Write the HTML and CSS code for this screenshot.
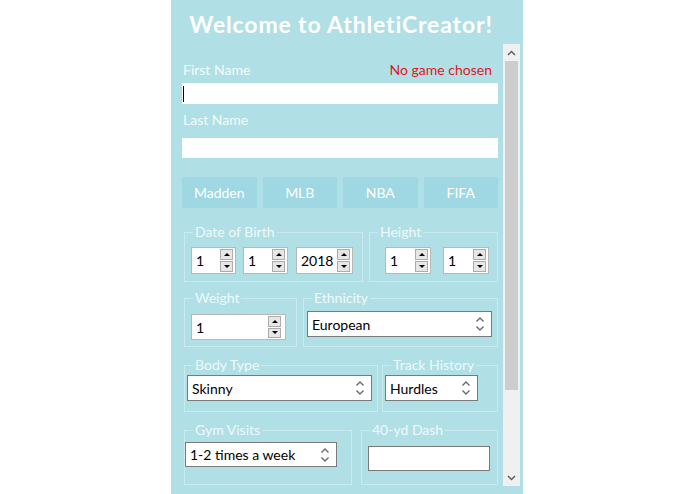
FILE: index.html
```html
<!DOCTYPE html>
<html>
<head>
<meta charset="utf-8">
<link rel="stylesheet" href="styles.css">
</head>
<body>
<div class="app">
  <div class="title">Welcome to AthletiCreator!</div>
  <div class="main">
    <div class="content">
      <div class="label-row first-label"><span>First Name</span><span class="error">No game chosen</span></div>
      <div class="field field-first"><span class="caret"></span></div>
      <div class="label-row last-label"><span>Last Name</span></div>
      <div class="field field-last"></div>
      <div class="games">
        <div class="game">Madden</div>
        <div class="game">MLB</div>
        <div class="game">NBA</div>
        <div class="game">FIFA</div>
      </div>

      <div class="group-row row-dob">
        <fieldset class="group g-dob">
          <legend>Date of Birth</legend>
          <div class="spins">
            <div class="spin s-day"><span class="val">1</span><span class="btns"><span class="up"></span><span class="down"></span></span></div>
            <div class="spin s-month"><span class="val">1</span><span class="btns"><span class="up"></span><span class="down"></span></span></div>
            <div class="spin s-year"><span class="val">2018</span><span class="btns"><span class="up"></span><span class="down"></span></span></div>
          </div>
        </fieldset>
        <fieldset class="group g-height">
          <legend>Height</legend>
          <div class="spins spins-wide">
            <div class="spin s-ft"><span class="val">1</span><span class="btns"><span class="up"></span><span class="down"></span></span></div>
            <div class="spin s-ft"><span class="val">1</span><span class="btns"><span class="up"></span><span class="down"></span></span></div>
          </div>
        </fieldset>
      </div>

      <div class="group-row row-weight">
        <fieldset class="group g-weight">
          <legend>Weight</legend>
          <div class="spin s-weight"><span class="val">1</span><span class="btns btns-weight"><span class="up"></span><span class="down"></span></span></div>
        </fieldset>
        <fieldset class="group g-eth">
          <legend>Ethnicity</legend>
          <div class="combo c-eth"><span class="txt">European</span>
            <svg class="chev" width="10" height="16" viewBox="0 0 10 16"><path d="M1.5 5.5 L5 2 L8.5 5.5 M1.5 10.5 L5 14 L8.5 10.5" fill="none" stroke="#6a6a6a" stroke-width="1.4"/></svg>
          </div>
        </fieldset>
      </div>

      <div class="group-row row-body">
        <fieldset class="group g-body">
          <legend>Body Type</legend>
          <div class="combo c-body"><span class="txt">Skinny</span>
            <svg class="chev" width="10" height="16" viewBox="0 0 10 16"><path d="M1.5 5.5 L5 2 L8.5 5.5 M1.5 10.5 L5 14 L8.5 10.5" fill="none" stroke="#6a6a6a" stroke-width="1.4"/></svg>
          </div>
        </fieldset>
        <fieldset class="group g-track">
          <legend>Track History</legend>
          <div class="combo c-track"><span class="txt">Hurdles</span>
            <svg class="chev" width="10" height="16" viewBox="0 0 10 16"><path d="M1.5 5.5 L5 2 L8.5 5.5 M1.5 10.5 L5 14 L8.5 10.5" fill="none" stroke="#6a6a6a" stroke-width="1.4"/></svg>
          </div>
        </fieldset>
      </div>

      <div class="group-row row-gym">
        <fieldset class="group g-gym">
          <legend>Gym Visits</legend>
          <div class="combo c-gym"><span class="txt">1-2 times a week</span>
            <svg class="chev" width="10" height="16" viewBox="0 0 10 16"><path d="M1.5 5.5 L5 2 L8.5 5.5 M1.5 10.5 L5 14 L8.5 10.5" fill="none" stroke="#6a6a6a" stroke-width="1.4"/></svg>
          </div>
        </fieldset>
        <fieldset class="group g-dash">
          <legend>40-yd Dash</legend>
          <div class="line-input"></div>
        </fieldset>
      </div>
    </div>
    <div class="scrollbar">
      <div class="sb-arrow"><svg width="9" height="6" viewBox="0 0 9 6"><path d="M1 5 L4.5 1.5 L8 5" fill="none" stroke="#606060" stroke-width="1.5"/></svg></div>
      <div class="sb-track"><div class="thumb"></div></div>
      <div class="sb-arrow"><svg width="9" height="6" viewBox="0 0 9 6"><path d="M1 1 L4.5 4.5 L8 1" fill="none" stroke="#606060" stroke-width="1.5"/></svg></div>
    </div>
  </div>
</div>
</body>
</html>
```
FILE: styles.css
```css
html, body {
  margin: 0;
  padding: 0;
  background: #ffffff;
  font-family: Lato, "Open Sans", "DejaVu Sans", sans-serif;
}

.app {
  width: 352px;
  height: 494px;
  margin-left: 171px;
  background: #b0e0e6;
  display: flex;
  flex-direction: column;
  overflow: hidden;
}

.title {
  height: 44px;
  box-sizing: border-box;
  padding: 4px 12px 0 0;
  line-height: 40px;
  text-align: center;
  color: #ffffff;
  font-weight: 700;
  font-size: 23px;
  letter-spacing: 0.85px;
  white-space: nowrap;
}

.main {
  display: flex;
  height: 442px;
}

.content {
  width: 332px;
  flex-shrink: 0;
  box-sizing: border-box;
  padding: 17px 5px 0 11px;
  overflow: hidden;
}

.label-row {
  display: flex;
  justify-content: space-between;
  height: 18px;
  line-height: 18px;
  padding: 0 6px 0 1px;
  font-size: 14px;
  color: #f3fbfc;
}

.last-label {
  margin-top: 7px;
}

.error {
  color: #e2151c;
}

.field {
  background: #ffffff;
  height: 21px;
  margin-top: 4px;
  display: flex;
  align-items: center;
}

.field-last {
  height: 20px;
  margin-top: 9px;
}

.caret {
  width: 1px;
  height: 16px;
  margin-left: 1px;
  background: #000000;
}

.games {
  display: flex;
  gap: 6px;
  margin-top: 19px;
}

.game {
  flex: 1;
  height: 31px;
  line-height: 31px;
  text-align: center;
  background: #9fd8e2;
  color: #ffffff;
  font-size: 14px;
}

.group-row {
  display: flex;
  margin-left: 2px;
}

.row-dob { margin-top: 16px; }
.row-weight { margin-top: 8px; }
.row-body { margin-top: 10px; }
.row-gym { margin-top: 10px; }

.group {
  margin: 0;
  flex-shrink: 0;
  box-sizing: border-box;
  border: 1px solid #c9eaef;
  min-width: 0;
  padding: 7px 0 7px 0;
}

.group legend {
  margin-left: 8px;
  padding: 0 2px;
  font-size: 14px;
  line-height: 16px;
  color: #eef9fb;
}

.g-dob { width: 179px; }
.g-height { width: 129px; margin-left: 6px; }

.g-weight { width: 113px; padding: 5px 0 6px 0; }
.g-eth { width: 195px; margin-left: 6px; padding: 5px 0 6px 0; }

.g-body { width: 194px; padding: 2px 0 10px 0; }
.g-track { width: 116px; margin-left: 4px; padding: 2px 0 10px 0; }

.g-gym { width: 168px; padding: 4px 0 13px 0; }
.g-dash { width: 137px; margin-left: 9px; padding: 4px 0 13px 0; }

.spins {
  display: flex;
  gap: 7px;
  margin-left: 6px;
}

.spins-wide {
  gap: 12px;
  margin-left: 15px;
}

.spin {
  display: flex;
  height: 27px;
  box-sizing: border-box;
  border: 1px solid #b8b8b8;
  background: #ffffff;
}

.s-day, .s-month { width: 45px; }
.s-month { margin-right: 1px; }
.s-year { width: 57px; }
.s-ft { width: 46px; }
.s-weight { width: 95px; height: 26px; margin: 3px 0 0 6px; }

.val {
  flex: 1;
  padding-left: 4px;
  font-size: 14px;
  line-height: 25px;
  color: #000000;
}

.btns {
  display: flex;
  flex-direction: column;
  gap: 1px;
  width: 13px;
  margin: 1px 2px 1px 0;
}

.btns-weight {
  margin-right: 4px;
}

.btns span {
  flex: 1;
  box-sizing: border-box;
  background: #e6e6e6;
  border: 1px solid #acacac;
  display: flex;
  align-items: center;
  justify-content: center;
}

.btns .up::before {
  content: "";
  border-left: 3px solid transparent;
  border-right: 3px solid transparent;
  border-bottom: 3px solid #000000;
}

.btns .down::before {
  content: "";
  border-left: 3px solid transparent;
  border-right: 3px solid transparent;
  border-top: 3px solid #000000;
}

.combo {
  display: flex;
  align-items: center;
  height: 26px;
  box-sizing: border-box;
  border: 1px solid #7a7a7a;
  background: #ffffff;
  padding: 0 6px 0 4px;
  font-size: 14px;
  color: #000000;
}

.combo .txt {
  flex: 1;
  white-space: nowrap;
}

.chev {
  flex-shrink: 0;
}

.c-eth { width: 185px; margin-left: 3px; }
.c-body { width: 185px; margin-left: 2px; }
.c-track { width: 93px; margin-left: 2px; }
.c-gym { width: 152px; height: 25px; }

.line-input {
  width: 122px;
  height: 25px;
  margin: 4px 0 0 6px;
  box-sizing: border-box;
  border: 1px solid #7a7a7a;
  background: #ffffff;
}

.scrollbar {
  width: 17px;
  flex-shrink: 0;
  background: #f0f0f0;
  display: flex;
  flex-direction: column;
}

.sb-arrow {
  height: 17px;
  display: flex;
  align-items: center;
  justify-content: center;
}

.sb-track {
  flex: 1;
}

.thumb {
  margin: 0 2px;
  height: 329px;
  background: #cdcdcd;
}
```
